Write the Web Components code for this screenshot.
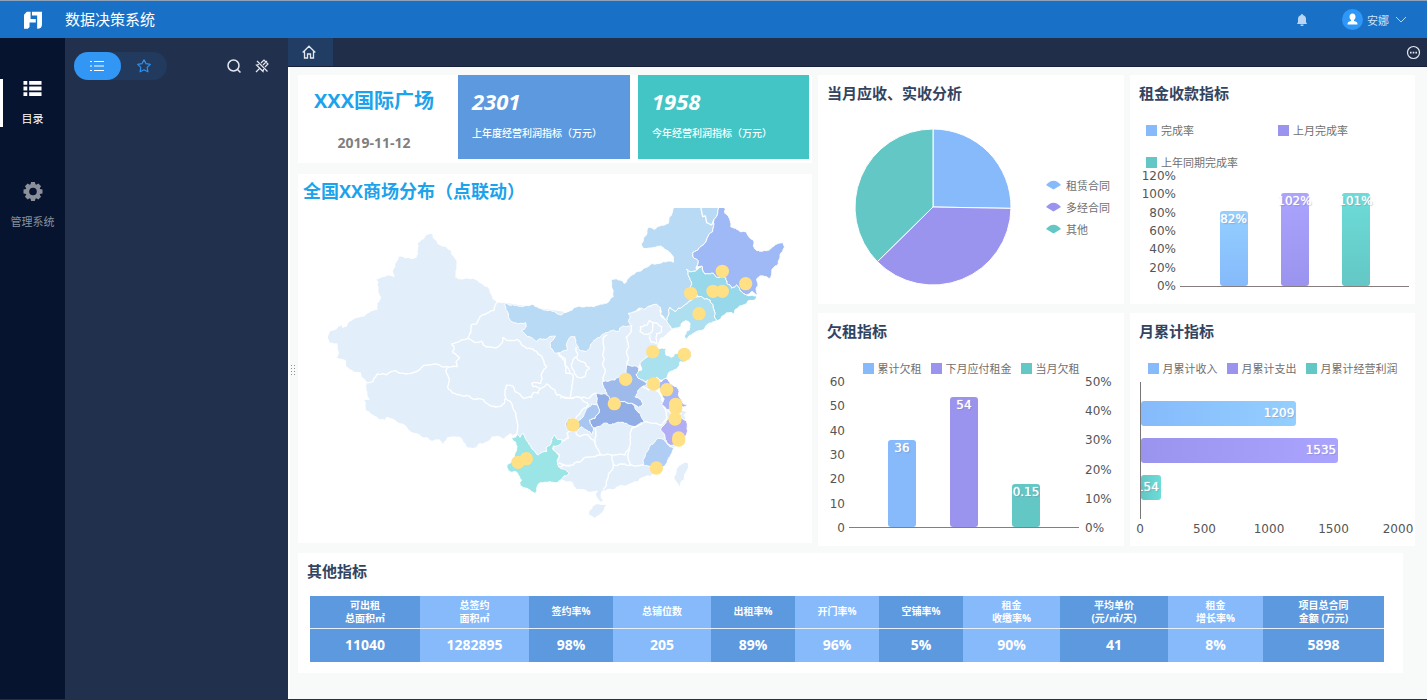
<!DOCTYPE html>
<html lang="zh-CN">
<head>
<meta charset="utf-8">
<title>数据决策系统</title>
<style>
html, body { margin: 0; }
body { min-height: 100vh; font-family: "Open Sans", "Noto Sans CJK SC", sans-serif; background: #f7faf9; }
</style>
</head>
<body>
<app-shell>
  <app-header slot="header" user="安娜">数据决策系统</app-header>
  <nav-rail slot="rail"></nav-rail>
  <side-panel slot="panel"></side-panel>
  <tab-bar slot="tabs"></tab-bar>
  <dash-board>
    <project-summary slot="left" name="XXX国际广场" date="2019-11-12">
      <stat-tile value="2301" style="--tile:#5d99de">上年度经营利润指标（万元）</stat-tile>
      <stat-tile value="1958" style="--tile:#43c5c5">今年经营利润指标（万元）</stat-tile>
    </project-summary>
    <dash-card slot="left" accent heading="全国XX商场分布（点联动）"><china-map></china-map></dash-card>
    <dash-card slot="charts" heading="当月应收、实收分析"><pie-chart></pie-chart></dash-card>
    <dash-card slot="charts" heading="租金收款指标">
      <chart-legend columns items="完成率,上月完成率,上年同期完成率"></chart-legend>
      <bar-chart class="wide" gradient max="120" ticks="120%,100%,80%,60%,40%,20%,0%" values="82,102,101" labels="82%,102%,101%"></bar-chart>
    </dash-card>
    <dash-card slot="charts" heading="欠租指标">
      <chart-legend items="累计欠租,下月应付租金,当月欠租"></chart-legend>
      <bar-chart class="tall" max="60" ticks="60,50,40,30,20,10,0" ticks2="50%,40%,30%,20%,10%,0%" values="36,54,18" labels="36,54,0.15"></bar-chart>
    </dash-card>
    <dash-card slot="charts" heading="月累计指标">
      <chart-legend items="月累计收入,月累计支出,月累计经营利润"></chart-legend>
      <row-chart max="2000" ticks="0,500,1000,1500,2000" values="1209,1535,154"></row-chart>
    </dash-card>
    <dash-card slot="bottom" heading="其他指标"><metric-table></metric-table></dash-card>
  </dash-board>
</app-shell>

<script>
const COLORS = ['#86bafb', '#9b94ef', '#63c7c5'];
const BRIGHT = ['#93cfff', '#aba4ff', '#6ddcd8'];

function define(name, css, html) {
  customElements.define(name, class extends HTMLElement {
    connectedCallback() {
      if (this.shadowRoot) return;
      const t = document.createElement('template');
      t.innerHTML = '<style>*{box-sizing:border-box}' + css + '</style>' + (typeof html === 'function' ? html(this) : html);
      this.attachShadow({ mode: 'open' }).append(t.content.cloneNode(true));
    }
  });
}
const list = (el, name) => (el.getAttribute(name) || '').split(',').filter(Boolean);

define('app-shell', `
  :host { display: flex; flex-direction: column; min-height: 100vh; box-sizing: border-box; border-top: 1px solid #8fa3b8; border-bottom: 1px solid #2b2f36; }
  .body { flex: 1; display: flex; }
  main { flex: 1; min-width: 0; display: flex; flex-direction: column; }
  .work { flex: 1; position: relative; border-left: 2px solid #fff; }
  .grip { position: absolute; left: 0; top: 50%; width: 6px; height: 12px; padding: 0; border: 0; transform: translateY(-19px); background: radial-gradient(circle, #8d9196 1px, transparent 1px) 0 0 / 3px 3px; }
`, `<slot name="header"></slot><div class="body"><slot name="rail"></slot><slot name="panel"></slot>
  <main><slot name="tabs"></slot><div class="work"><slot></slot><button class="grip" aria-label="拖动"></button></div></main></div>`);

define('app-header', `
  :host { display: flex; align-items: center; height: 37px; background: #1971c7; color: #fff; }
  .logo { width: 18px; height: 18px; margin: 0 23px 0 24px; }
  h1 { flex: 1; margin: 0; font-size: 15px; font-weight: 400; line-height: 22px; padding-bottom: 2px; }
  button { display: flex; align-items: center; border: 0; background: none; padding: 0; font: 11px/16px "Noto Sans CJK SC", sans-serif; color: #cfe3f7; }
  .bell { margin-right: 34px; } .user { margin-right: 20px; } .user svg:first-child { margin-right: 4px; } .user svg:last-child { margin-left: 6px; }
`, el => `
  <svg class="logo" viewBox="0 0 52 52" fill="#fff"><path d="M0 51V11L8 2h11v21h15v10H16v13l-5 5z"/><path d="M23 2h29v36q0 13-14 13V13H23z"/></svg>
  <h1><slot></slot></h1>
  <button class="bell" aria-label="通知"><svg width="12" height="14" viewBox="0 0 12 14" fill="#b9d5f1"><path d="M6 1q-1 0-1 1Q2 3 2 6v3l-1 2h10l-1-2V6q0-3-3-4 0-1-1-1zM4.500 11.500h3v1q-1.500 1-3 0z"/></svg></button>
  <button class="user"><svg width="21" height="21" viewBox="0 0 21 21"><circle cx="10.500" cy="10.500" r="10.500" fill="#2f97f7"/><path d="M10.500 4.500q3 0 3 3.500 0 2-1.500 3v1q3.500.5 3.500 3v.5h-10V15q0-2.500 3.500-3v-1Q7.500 10 7.500 8q0-3.500 3-3.500z" fill="#fff"/></svg>${el.getAttribute('user')}<svg width="12" height="8" viewBox="0 0 12 8" fill="none" stroke="#b9d5f1"><path d="M1 1l5 5 5-5"/></svg></button>`);

define('nav-rail', `
  :host { display: block; width: 65px; background: #06142f; padding-top: 41px; }
  a { display: flex; flex-direction: column; align-items: center; width: 65px; height: 48px; text-decoration: none; color: #8b909b; font-size: 11px; line-height: 16px; margin-bottom: 55px; }
  a svg { margin-bottom: 13px; }
  .on { color: #fff; border-left: 3px solid #fff; padding-right: 3px; }
  span { white-space: nowrap; }
`, `
  <a class="on" href="#catalog"><svg width="19" height="20" viewBox="0 0 19 20" fill="#fff"><path d="M0 2h4v4H0zM6 2h13v4H6zM0 8h4v4H0zM6 8h13v4H6zM0 14h4v4H0zM6 14h13v4H6z"/></svg><span>目录</span></a>
  <a href="#admin"><svg width="20" height="20" viewBox="0 0 20 20"><g fill="#8b909b"><circle cx="10" cy="10" r="7.800"/>${[0, 45, 90, 135].map(a => `<path d="M8 0h4l1 4H7zM8 20h4l1-4H7z" transform="rotate(${a} 10 10)"/>`).join('')}</g><circle cx="10" cy="10" r="4" fill="#06142f"/></svg><span>管理系统</span></a>`);

define('side-panel', `
  :host { display: block; width: 223px; background: #21304c; }
  .bar { display: flex; align-items: center; padding: 14px 18px 0 9px; }
  .pill { display: flex; width: 93px; height: 28px; border-radius: 14px; background: #223a5e; margin-right: auto; }
  button { border: 0; background: none; padding: 0; display: grid; place-items: center; }
  .pill button { width: 47px; height: 28px; border-radius: 14px; }
  .pill .on { background: #3296f5; }
  .tool { width: 16px; height: 16px; margin-left: 12px; }
`, `<div class="bar"><div class="pill">
  <button class="on" aria-label="列表"><svg width="14" height="12" viewBox="0 0 14 12" stroke="#fff" fill="none"><path d="M4 1.500h10M4 6h10M4 10.500h10M0 1.500h2M0 6h2M0 10.500h2"/></svg></button>
  <button aria-label="收藏"><svg width="14" height="14" viewBox="0 0 14 14" stroke="#3190ea" stroke-width="1.200" stroke-linejoin="round" fill="none"><path d="M7 .8l2 3.900 4.300.7-3.100 3 .7 4.400L7 10.800l-3.900 2 .7-4.400-3.100-3L5 4.700z"/></svg></button></div>
  <button class="tool" aria-label="搜索"><svg width="16" height="16" viewBox="0 0 16 16" stroke="#e4e8ee" stroke-width="1.500" fill="none"><circle cx="7.500" cy="7.500" r="5.500"/><path d="M11.500 11.500l3 3"/></svg></button>
  <button class="tool" aria-label="取消固定"><svg width="14" height="14" viewBox="0 0 14 14" stroke="#e4e8ee" stroke-width="1.200" fill="none"><path d="M2 2l10.500 10.500M6 4l3-3 4 4-3 3M4 5.500L1.500 6l6.500 6.500.5-2.500M8 6l4-4M5 9l-4 4"/></svg></button></div>`);

define('tab-bar', `
  :host { display: flex; align-items: center; justify-content: space-between; height: 29px; background: #202e4a; border-bottom: 1px solid #17223a; box-sizing: border-box; padding-right: 6px; }
  a, button { display: grid; place-items: center; border: 0; background: none; padding: 0; }
  a { width: 45px; height: 28px; padding-right: 3px; background: #223d63; }
`, `<a href="#home" aria-label="首页"><svg width="14" height="14" viewBox="0 0 14 14" fill="none" stroke="#e4e8ee" stroke-width="1.300"><path d="M.7 7.500L7 1.200l6.300 6.300M2.500 6v7h3V9h3v4h3V6"/></svg></a>
  <button aria-label="更多"><svg width="15" height="15" viewBox="0 0 15 15"><circle cx="7.500" cy="7.500" r="6" fill="none" stroke="#e4e8ee" stroke-width="1.200"/><path d="M4 6.800h1.600v1.600H4zM6.700 6.800h1.600v1.600H6.700zM9.400 6.800H11v1.600H9.400z" fill="#e4e8ee"/></svg></button>`);

define('dash-board', `
  :host { display: block; padding: 8px 12px 20px 8px; }
  .top { display: grid; grid-template-columns: 514fr 603fr; align-items: start; margin-bottom: 7px; }
  .left { display: flex; flex-direction: column; gap: 11px; }
  .charts { display: grid; grid-template-columns: 306fr 285fr; gap: 9px 6px; margin-left: 6px; }
  .bottom { padding-right: 12px; }
`, `<div class="top"><div class="left"><slot name="left"></slot></div><div class="charts"><slot name="charts"></slot></div></div><div class="bottom"><slot name="bottom"></slot></div>`);

define('dash-card', `
  :host { display: block; background: #fff; min-width: 0; }
  h2 { margin: 0; padding: 0 9px; font-size: 15px; line-height: 36px; font-weight: 700; color: #334461; }
  :host([accent]) h2 { padding: 0 5px; font-size: 17px; line-height: 34px; color: #1ca3ec; }
  :host([accent]) h2 { font-size: 18px; }
`, el => `<h2>${el.getAttribute('heading')}</h2><slot></slot>`);

define('project-summary', `
  :host { display: grid; grid-template-columns: 152fr 172fr 171fr; gap: 8px; height: 88px; box-sizing: border-box; padding: 0 3px 4px 0; background: #fff; text-align: center; }
  .id { padding-top: 12px; }
  h1 { margin: 0; font-size: 20px; line-height: 28px; color: #1ca3ec; white-space: nowrap; }
  time { display: block; margin-top: 18px; font-size: 14px; line-height: 20px; font-weight: 700; color: #7f7f7f; }
`, el => `<div class="id"><h1>${el.getAttribute('name')}</h1><time>${el.getAttribute('date')}</time></div><slot></slot>`);

define('stat-tile', `
  :host { display: block; background: var(--tile); color: #fff; text-align: left; padding: 12px 0 0 14px; }
  b { display: block; font-size: 22px; line-height: 28px; font-style: italic; }
  span { display: block; margin-top: 10px; font-size: 10px; line-height: 16px; font-weight: 500; white-space: nowrap; }
`, el => `<b>${el.getAttribute('value')}</b><span><slot></slot></span>`);

define('chart-legend', `
  :host { display: block; padding-top: 12px; font: 11px/14px "Noto Sans CJK SC", sans-serif; color: #707070; }
  div { display: flex; justify-content: center; gap: 9px; }
  :host([columns]) div { display: grid; grid-template-columns: 132px 1fr; gap: 18px 0; padding-left: 16px; }
  span { display: flex; align-items: center; gap: 4px; white-space: nowrap; }
  i { width: 11px; height: 11px; }
`, el => `<div>${list(el, 'items').map((t, i) => `<span><i style="background:${COLORS[i]}"></i>${t}</span>`).join('')}</div>`);

define('bar-chart', `
  :host { display: flex; padding-bottom: 11px; font: 12px/14px "DejaVu Sans", sans-serif; color: #555; }
  .y { display: flex; flex-direction: column; justify-content: space-between; text-align: right; width: 27px; }
  :host(.wide) .y { width: 46px; }
  .y2 { width: 39px; text-align: left; }
  .plot { flex: 1; display: flex; justify-content: center; align-items: flex-end; gap: 34px; margin: 7px 6px 7px 4px; border-bottom: 1px solid #867e7e; height: 145px; box-sizing: content-box; }
  :host(.wide) .plot { height: 110px; margin-bottom: 6px; gap: 33px; }
  .bar { width: 28px; border-radius: 3px; display: flex; justify-content: center; padding-top: 1px; color: #fff; text-shadow: 0 0 1px #fff, 1px 1px 1px rgba(80,80,120,.3); }
`, el => {
  const grad = el.hasAttribute('gradient'), labels = list(el, 'labels'), max = +el.getAttribute('max'), t2 = list(el, 'ticks2');
  const bars = list(el, 'values').map((v, i) => `<div class="bar" style="height:${v / max * 100}%;background:${grad ? `linear-gradient(${BRIGHT[i]},${COLORS[i]})` : COLORS[i]}">${labels[i]}</div>`).join('');
  const col = (a, c) => `<div class="${c}">${a.map(t => `<span>${t}</span>`).join('')}</div>`;
  return col(list(el, 'ticks'), 'y') + `<div class="plot">${bars}</div>` + (t2.length ? col(t2, 'y y2') : '');
});

define('row-chart', `
  :host { display: block; padding: 7px 17px 9px 10px; font: 12px/14px "DejaVu Sans", sans-serif; color: #555; }
  .plot { display: flex; flex-direction: column; gap: 12px; height: 137px; padding-top: 19px; border-left: 1px solid #777; }
  .bar { height: 25px; line-height: 24px; border-radius: 3px; display: flex; justify-content: flex-end; padding-right: 2px; overflow: hidden; color: #fff; text-shadow: 0 0 1px #fff, 1px 1px 1px rgba(80,80,120,.3); }
  .x { display: flex; justify-content: space-between; margin-top: 3px; }
  .x span { width: 0; display: flex; justify-content: center; }
`, el => `<div class="plot">${list(el, 'values').map((v, i) => `<div class="bar" style="width:${v / el.getAttribute('max') * 100}%;background:linear-gradient(90deg,${COLORS[i]},${BRIGHT[i]})">${v}</div>`).join('')}</div>
  <div class="x">${list(el, 'ticks').map(t => `<span>${t}</span>`).join('')}</div>`);

define('pie-chart', `
  :host { display: flex; align-items: center; justify-content: space-between; padding: 17px 14px 0 36px; }
  ul { margin: 0; padding: 0; list-style: none; font: 11px/22px "Noto Sans CJK SC", sans-serif; color: #707070; }
  li { display: flex; align-items: center; gap: 5px; }
`, () => {
  const at = d => [79 + 78 * Math.sin(d * Math.PI / 180), 79 - 78 * Math.cos(d * Math.PI / 180)].join(' ');
  const cuts = [0, 91, 225.5, 360];
  return `<svg width="158" height="158" viewBox="0 0 158 158" stroke="#fff">${COLORS.map((c, i) => `<path fill="${c}" d="M79 79L${at(cuts[i])}A78 78 0 0 1 ${at(cuts[i + 1])}z"/>`).join('')}</svg>
  <ul>${['租赁合同', '多经合同', '其他'].map((t, i) => `<li><svg width="15" height="10" viewBox="0 0 15 10"><path d="M0 5Q7.500-3.500 15 5L7.500 9.500z" fill="${COLORS[i]}"/></svg>${t}</li>`).join('')}</ul>`;
});

/* Province shapes. Shared borders are roughened from their end points, so neighbours still meet. */
const LAND = ['320,104 338,103 343,118 358,135 376,140 392,152 396,165 409,180 409,205 405,232 420,238 468,240 485,252 505,263 512,280 530,307 553,308 760,340 760,835 745,815 650,760 590,700 578,706 570,700 552,717 535,708 515,710 500,725 470,741 440,740 428,718 412,710 388,710 366,732 358,718 330,720 305,710 290,700 275,697 262,683 238,670 215,655 198,652 194,660 170,650 140,632 138,610 132,600 148,600 142,575 138,560 140,545 125,530 122,517 100,515 80,500 76,480 48,472 56,462 50,430 30,428 24,408 32,392 65,376 68,384 80,380 95,362 130,350 172,330 172,310 183,292 175,268 175,245 168,240 215,228 224,232 218,215 235,170 275,177 290,172 293,130 300,125'];
const LAND_E = [
  '-10,400 205,340 245,325 290,313 302,325 300,345 320,362 328,378 335,388 318,405 305,412 298,420 292,432 280,455 250,480 235,500 232,520 280,560 305,590 320,625 365,632 384,635 370,645 380,670 375,705 345,740 325,780 310,800 270,828 240,835 215,848 180,855 160,868 125,872 122,885 130,903 120,905 110,890 115,872 95,875 50,868 40,850 15,842 -10,838',
  '375,788 383,790 380,812 372,835 362,845 358,862 354,850 344,838 350,812 362,795',
  '90,930 100,918 115,912 138,914 132,930 120,942 105,953 88,945'];
const LINES = [
  '530,307 523,330 500,340 478,355 468,372 455,374 443,415 395,432 402,440 398,455 418,475 408,485 412,500 380,500 350,492 310,497 300,508 270,520 240,520 225,512 200,524 172,522 158,545 138,547',
  '380,500 378,515 385,530 383,560 400,580 435,588 465,598 490,598 513,618 535,620 553,610 557,595',
  '443,415 460,425 485,423 490,435 530,443 545,430 548,413 562,422 590,418 605,435 640,448 665,468 680,500 665,520 662,550 635,550 640,560 660,565 655,580 640,578 635,592 610,595 585,575 578,558 560,555 557,595 575,610 585,635 592,670 592,700',
  '660,565 680,552 705,570 710,585 735,595 765,590', '715,462 735,475 735,495 750,520', '725,718 700,740 700,755 718,765 712,800 750,800'];
const LINES_E = [
  '215,375 215,395 198,412 205,430 200,455 205,480 200,495', '240,380 262,375 268,362 280,368 278,385 270,400 255,403 240,395 240,380',
  '280,368 305,380 305,395 290,400 290,430 272,425 270,405', '142,405 130,412 130,455 128,490 135,520 128,545',
  '48,440 50,475 75,488 88,505 75,530 50,530 40,510 38,485 48,470', '-5,457 15,490 18,520 40,525', '0,595 50,590 85,595 108,580',
  '40,525 38,550 30,590', '50,590 72,605 85,615 60,640 45,660', '248,560 265,570 285,565 305,590 310,620 320,655 305,675 280,670 252,665',
  '252,665 215,685 210,700 208,745 195,765 155,765 120,765 105,730 105,675', '208,745 205,775 215,795 250,795', '105,730 85,705 60,710 45,690 20,700 25,715 0,722',
  '-5,790 20,798 40,795 70,775 100,770 120,765', '155,765 160,795 145,830 130,868', '160,795 185,792 215,795', '320,628 335,640 365,640'];
const PROVINCES = [
  ['#b8daf5', '-167,308 -130,316 -80,312 -60,325 -30,330 5,345 40,325 80,318 100,320 130,312 160,290 155,260 155,238 175,240 192,250 215,225 270,195 310,185 340,187 335,165 315,148 300,138 285,142 262,145 250,145 245,130 265,82 285,88 325,70 328,50 340,20 475,20 472,45 460,65 458,95 440,120 430,135 398,158 400,172 415,182 410,198 410,210 395,215 380,208 390,235 395,250 390,262 400,270 415,290 380,312 345,335 330,322 320,362 302,345 302,325 290,313 270,318 250,328 235,325 205,340 210,350 205,365 212,375 190,378 175,395 160,390 125,405 110,415 95,430 78,455 60,450 48,430 45,410 30,412 22,425 22,450 -15,460 -28,445 -30,428 -14,408 -30,410 -42,418 -60,415 -70,425 -82,415 -100,408 -115,392 -103,382 -103,368 -140,367 -155,350'],
  ['#9fb8f6', '475,20 492,20 495,40 510,60 512,80 530,88 560,98 580,120 580,138 590,152 620,152 640,140 655,130 670,128 668,155 660,165 655,190 635,220 632,235 600,228 590,240 592,285 575,275 560,285 545,275 530,255 515,265 500,250 495,232 470,232 460,220 435,222 425,198 410,198 415,182 400,172 398,158 430,135 440,120 458,95 460,65 472,45'],
  ['#97d8ea', '380,208 395,215 410,210 425,198 435,222 460,220 470,232 495,232 500,250 515,265 530,255 545,275 560,285 590,288 585,300 565,302 560,312 540,318 525,330 525,345 500,338 485,350 470,362 462,330 450,300 425,290 415,290 400,270 390,262 395,250 390,235'],
  ['#aedff1', '330,322 345,335 380,312 415,290 425,290 450,300 462,330 470,362 440,375 430,390 400,400 380,418 372,408 388,390 390,370 375,362 362,380 335,388 320,362'],
  ['#a9e1ee', '240,488 270,468 290,448 318,445 318,465 335,472 345,460 375,455 395,468 385,480 360,485 355,500 330,515 315,540 300,540 290,532 270,545 245,540 228,525 245,510'],
  ['#9dbaea', '128,545 165,540 200,520 200,495 235,503 235,515 228,525 245,540 262,552 235,570 225,590 245,600 248,615 235,622 215,610 180,605 150,598 140,578'],
  ['#90ade5', '108,580 140,585 150,598 180,605 215,610 225,625 240,640 252,665 225,680 200,670 170,668 150,675 130,670 100,683 88,660 105,655 118,635 112,615'],
  ['#a9c6f0', '80,625 95,612 112,615 118,635 105,655 88,660 100,683 95,705 78,690 65,680 55,690 30,695 15,675 25,655 55,662 70,650'],
  ['#a8b5f5', '262,540 290,552 318,535 350,560 360,595 382,618 365,620 345,630 320,628 305,615 312,595 300,565 270,560'],
  ['#b2aef3', '320,660 340,645 360,650 380,665 382,690 375,710 345,735 322,730 302,690'],
  ['#b0cdf3', '270,735 295,715 310,718 330,740 342,745 325,775 310,800 295,810 250,795 255,770'],
  ['#9ce5e7', '-145,715 -132,710 -130,698 -120,712 -110,700 -102,718 -80,750 -65,765 -40,755 -40,740 -30,735 -25,718 -15,705 -8,718 8,718 4,730 -20,738 -22,748 -3,765 -8,780 -5,800 15,808 28,822 10,830 -5,845 -30,845 -60,848 -70,865 -72,880 -85,875 -102,865 -122,858 -115,840 -132,815 -155,812 -160,798 -145,785 -130,750 -132,728']];
const PINS = '487,214 557,251 392,280 459,274 487,274 417,341 278,455 373,463 197,538 163,611 39,675 281,552 320,569 347,613 347,625 345,657 356,714 356,720 289,804 -126,787 -101,776';

function rough(points, closed) {
  const p = points.split(' ').map(s => s.split(',').map(Number));
  const out = [];
  const split = (a, b, n) => {
    const dx = b[0] - a[0], dy = b[1] - a[1], len = Math.hypot(dx, dy);
    if (n === 0 || len < 6 || len > 120) { out.push(b.map(v => v.toFixed(1)).join(' ')); return; }
    const m = [(a[0] + b[0]) / 2, (a[1] + b[1]) / 2];
    const k = Math.min(len * .16, 4), h = Math.sin(m[0] * 12.9 + m[1] * 78.2) * 43758.5, g = Math.sin(m[0] * 39.3 + m[1] * 11.1) * 24634.6;
    const q = [m[0] + ((h - Math.floor(h)) * 2 - 1) * k, m[1] + ((g - Math.floor(g)) * 2 - 1) * k];
    split(a, q, n - 1); split(q, b, n - 1);
  };
  out.push(p[0].join(' '));
  for (let i = 1; i < p.length; i++) split(p[i - 1], p[i], 3);
  if (closed) split(p[p.length - 1], p[0], 3);
  return 'M' + out.join('L') + (closed ? 'z' : '');
}

define('china-map', `:host { display: block; } svg { display: block; width: 100%; }
  .land { fill: #e3eefb; } .lines { fill: none; stroke: #fff; stroke-width: 4; } .areas { stroke: #fff; stroke-width: 3; } .pins { fill: #ffe084; }`,
  () => `<svg viewBox="-66 24 1542 1005" role="img" aria-label="全国商场分布地图" stroke-linejoin="round">
  <g class="land">${LAND.map(d => `<path d="${rough(d, true)}"/>`).join('')}</g>
  <g class="land" transform="translate(720 0)">${LAND_E.map(d => `<path d="${rough(d, true)}"/>`).join('')}</g>
  <g class="lines">${LINES.map(d => `<path d="${rough(d)}"/>`).join('')}</g>
  <g class="lines" transform="translate(720 0)">${LINES_E.map(d => `<path d="${rough(d)}"/>`).join('')}</g>
  <g transform="translate(720 0)"><g class="areas">${PROVINCES.map(([c, d]) => `<path fill="${c}" d="${rough(d, true)}"/>`).join('')}</g>
  <path class="lines" d="M422 20L428 50 436 48 440 68 455 75 462 60"/>
  <g class="pins">${PINS.split(' ').map(s => { const [x, y] = s.split(','); return `<circle cx="${x}" cy="${y}" r="20"/>`; }).join('')}</g></g></svg>`);

const METRICS = [['可出租<br>总面积㎡', '11040', 110], ['总签约<br>面积㎡', '1282895', 109], ['签约率%', '98%', 84], ['总铺位数', '205', 98], ['出租率%', '89%', 84], ['开门率%', '96%', 84], ['空铺率%', '5%', 84], ['租金<br>收缴率%', '90%', 97], ['平均单价<br>(元/㎡/天)', '41', 108], ['租金<br>增长率%', '8%', 95], ['项目总合同<br>金额 (万元)', '5898', 121]];
define('metric-table', `
  :host { display: block; padding: 7px 19px 11px 12px; }
  table { width: 100%; table-layout: fixed; border-collapse: collapse; color: #fff; font-weight: 700; }
  th, td { padding: 0; text-align: center; background: #5d99de; }
  th:nth-child(even), td:nth-child(even) { background: #86bafb; }
  th { height: 32px; font-size: 10px; line-height: 13px; }
  td { height: 34px; font-size: 14px; line-height: 20px; border-top: 1px solid #e6f0fc; }
`, () => `<table><colgroup>${METRICS.map(m => `<col style="width:${m[2]}px">`).join('')}</colgroup>
  <thead><tr>${METRICS.map(m => `<th scope="col">${m[0]}</th>`).join('')}</tr></thead><tbody><tr>${METRICS.map(m => `<td>${m[1]}</td>`).join('')}</tr></tbody></table>`);
</script>
</body>
</html>
